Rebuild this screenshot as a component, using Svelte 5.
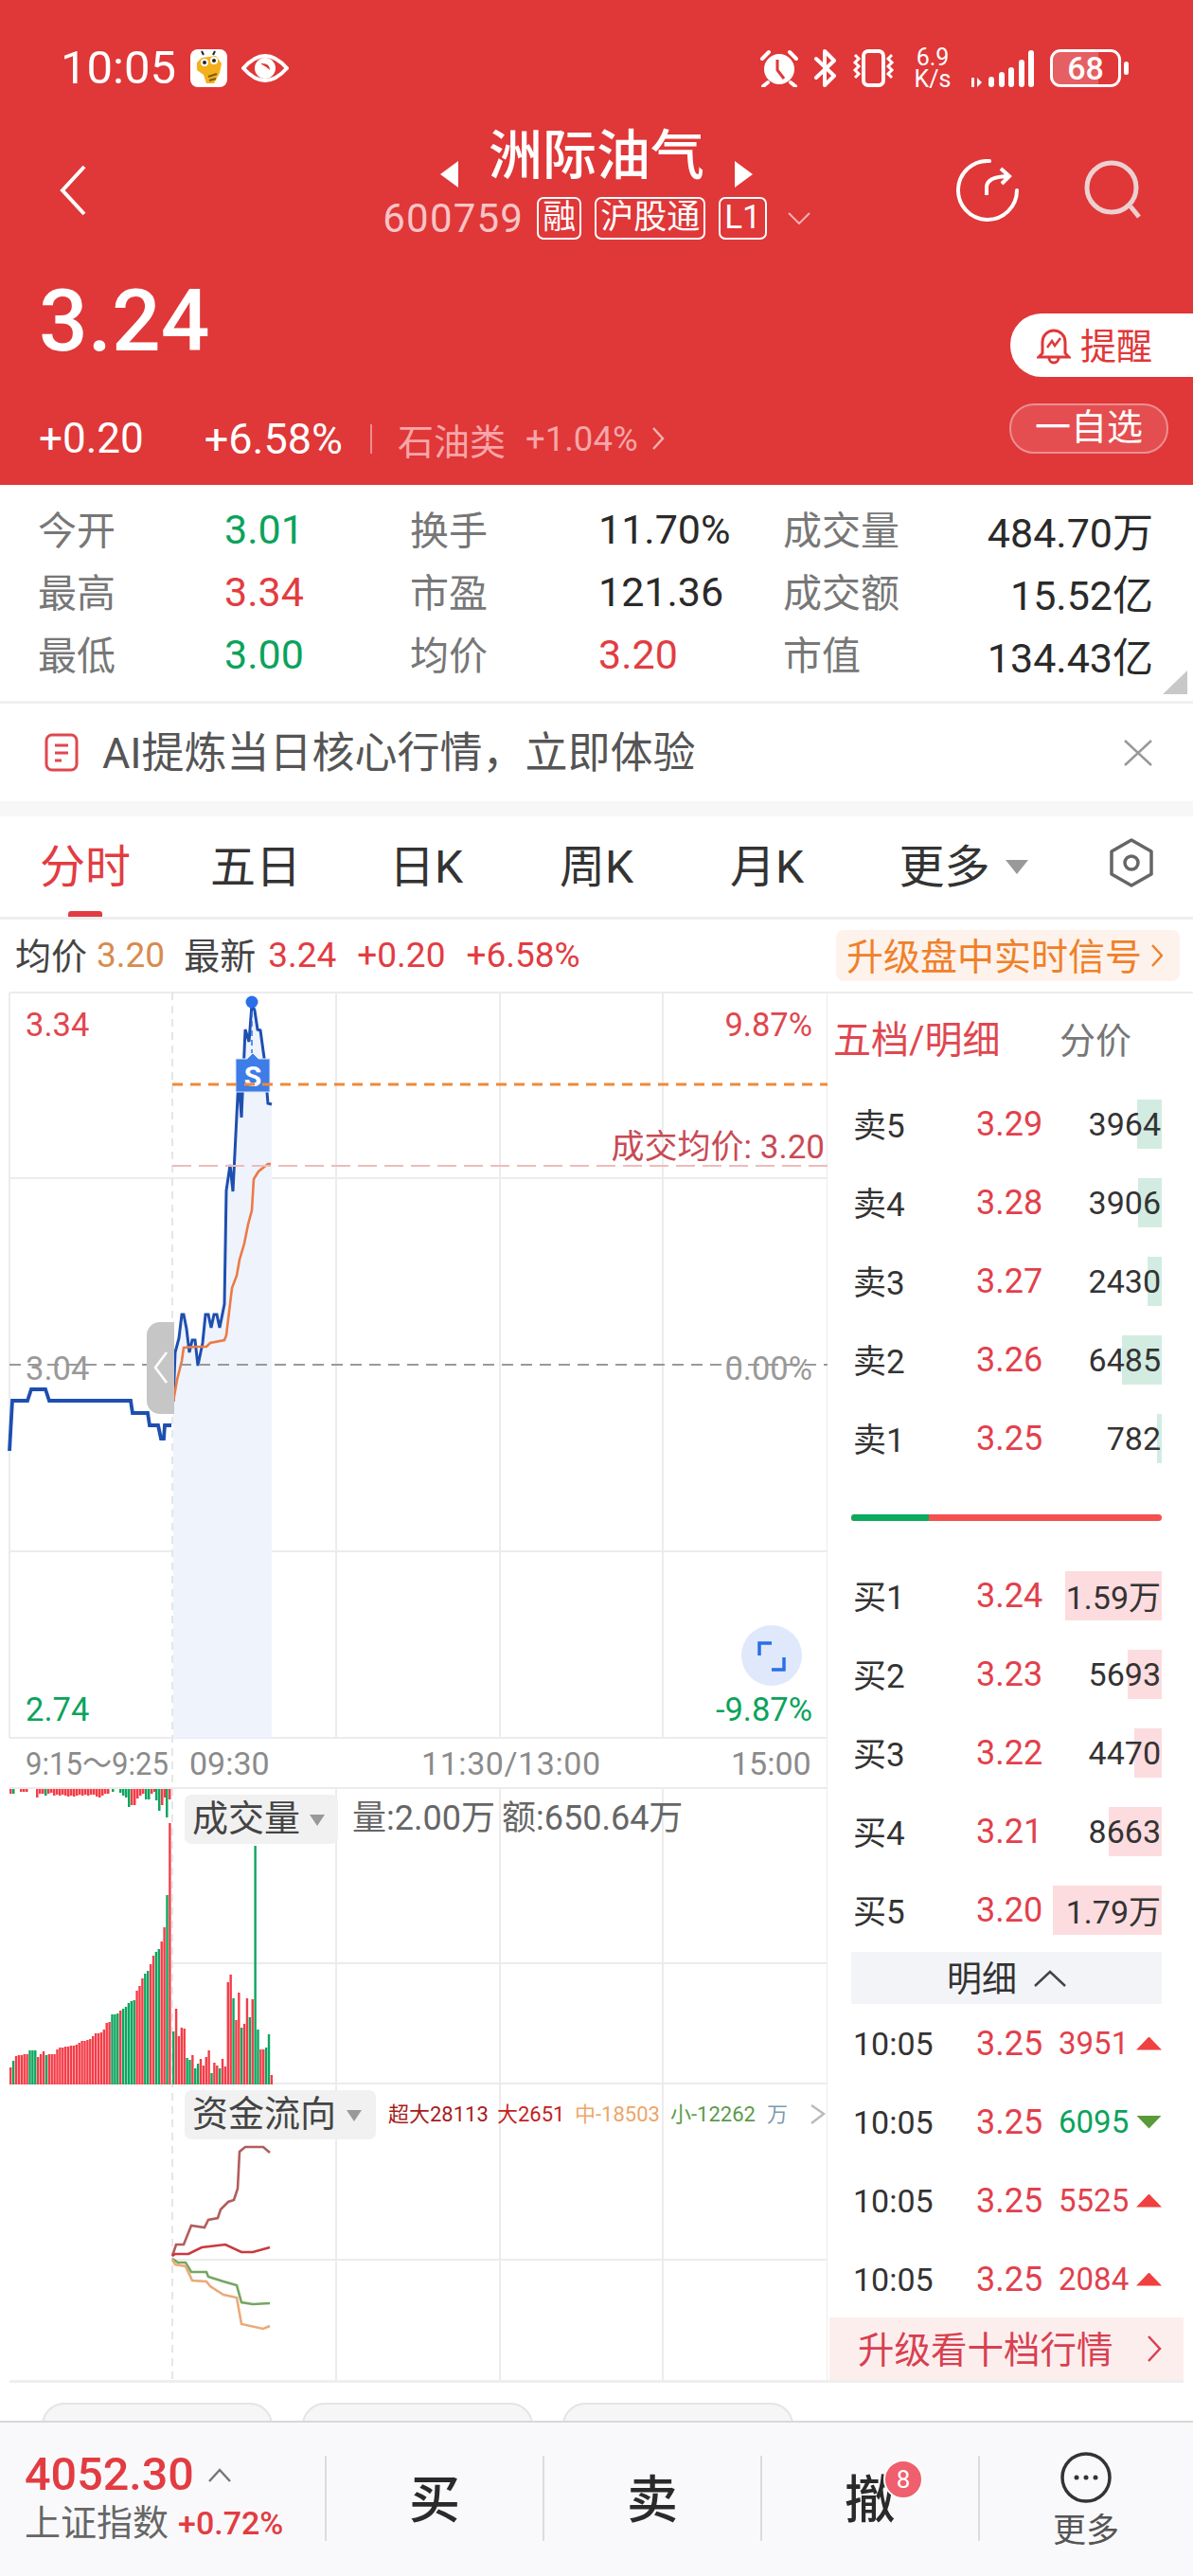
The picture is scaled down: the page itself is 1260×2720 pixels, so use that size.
<script>
  const stats = [
    ['今开', '3.01', 'g', '换手', '11.70%', '', '成交量', '484.70万'],
    ['最高', '3.34', 'r', '市盈', '121.36', '', '成交额', '15.52亿'],
    ['最低', '3.00', 'g', '均价', '3.20', 'r', '市值', '134.43亿']
  ]
  const tabs = ['分时', '五日', '日K', '周K', '月K']

  const sells = [
    ['卖5', '3.29', '3964', 26],
    ['卖4', '3.28', '3906', 25],
    ['卖3', '3.27', '2430', 15],
    ['卖2', '3.26', '6485', 42],
    ['卖1', '3.25', '782', 5]
  ]
  const buys = [
    ['买1', '3.24', '1.59万', 102],
    ['买2', '3.23', '5693', 36],
    ['买3', '3.22', '4470', 29],
    ['买4', '3.21', '8663', 56],
    ['买5', '3.20', '1.79万', 115]
  ]
  const ticks = [
    ['10:05', '3.25', '3951', true],
    ['10:05', '3.25', '6095', false],
    ['10:05', '3.25', '5525', true],
    ['10:05', '3.25', '2084', true]
  ]

  // chart coordinates are page pixels, the svg viewBox starts at y=1047
  const preLine = '10,1532 13,1479 29,1479 33,1467 48,1467 52,1479 138,1479 140,1492 156,1492 158,1505 167,1505 170,1519 173,1519 174,1505 181,1505'
  const mainLine = '183,1480 185,1428 189,1413 192,1388 194,1388 197,1403 200,1428 203,1415 206,1415 209,1442 214,1418 217,1388 220,1388 223,1402 226,1388 229,1388 232,1402 237,1377 239,1257 243,1230 246,1258 252,1138 255,1180 259,1087 263,1100 266,1060 269,1067 272,1087 275,1088 279,1117 283,1165 287,1166'
  const avgLine = '183,1480 187,1457 192,1437 194,1423 208,1422 218,1422 222,1418 237,1415 239,1410 245,1360 250,1347 253,1330 258,1313 262,1293 266,1278 268,1245 273,1237 283,1229 286,1229'

  const flowXL = '182,2382 186,2370 194,2370 202,2350 216,2352 220,2344 230,2342 233,2333 241,2325 247,2323 251,2311 253,2272 259,2267 278,2267 285,2273'
  const flowL = '182,2382 185,2380 199,2380 213,2373 238,2370 255,2378 267,2378 285,2373'
  const flowS = '182,2385 188,2389 196,2389 202,2399 218,2399 220,2404 236,2409 250,2413 255,2431 267,2433 285,2432'
  const flowM = '182,2386 185,2391 196,2393 203,2408 218,2409 222,2414 236,2423 250,2426 255,2454 278,2459 285,2456'

  const preH = [18,25,30,31,31,32,32,36,36,36,29,32,35,31,32,32,32,37,39,39,40,40,41,41,42,44,46,46,47,48,51,54,54,55,58,65,66,74,74,75,78,80,82,86,88,89,99,104,112,117,120,127,136,140,143,151,166,200,276]
  const preC = 'rgrrrrrgggrrrgrrrrrrrrrrrrrrrrrrrrrrrgggrgggggrrrggrrggrrgr'
  const postH = [56,80,51,60,59,28,26,31,17,22,27,20,29,36,12,23,20,17,27,19,108,116,91,68,97,60,64,91,71,90,252,58,37,37,39,53,10]
  const postC = 'grrrrggrggrrrrgrrgrrrrgrrgrrgrggrrggr'

  const topBars = [
    [10,5,'r'],[13,5,'g'],[21,3,'r'],[24,3,'r'],[27,3,'r'],
    [38,9,'r'],[41,5,'r'],[44,5,'r'],[47,7,'g'],[50,5,'r'],[53,4,'r'],[56,7,'r'],[59,6,'r'],[62,7,'r'],[65,6,'r'],[68,7,'r'],[71,8,'r'],[74,7,'r'],[77,8,'r'],[80,7,'r'],[83,6,'r'],[86,7,'r'],[89,6,'r'],[92,7,'r'],[95,6,'r'],[98,6,'r'],[101,8,'r'],[104,9,'r'],[107,7,'r'],[110,5,'r'],[113,5,'r'],
    [118,3,'g'],[126,4,'g'],[129,7,'g'],[132,9,'g'],[135,19,'g'],[138,17,'r'],[141,17,'r'],[144,10,'r'],[147,7,'r'],[150,5,'r'],[153,11,'g'],[156,11,'g'],[159,5,'r'],[162,3,'r'],[164,12,'g'],[167,23,'g'],[170,17,'r'],[173,9,'r'],[175,30,'g'],[178,11,'r']
  ]

  const colour = { r: '#f53c48', g: '#0ca65f' }
  const bars = [
    ...preH.map((h, i) => ({ x: 10 + i * 2.9, h, c: colour[preC[i]] })),
    ...postH.map((h, i) => ({ x: 182 + i * 2.88, h, c: colour[postC[i]] }))
  ]
</script>

<div class="page">
  <header class="top">
    <div class="status">
      <div class="status-left">
        <span class="clock">10:05</span>
        <svg class="bee" width="39" height="40" viewBox="0 0 39 40">
          <rect width="39" height="40" rx="8" fill="#fff"/>
          <path d="M12 9 L27 7 L33 15 L31 25 L25 36 L17 36 L14 27 L7 22 L7 14Z" fill="#f4b01c"/>
          <circle cx="15" cy="14" r="4" fill="#fff"/><circle cx="25" cy="12" r="4" fill="#fff"/>
          <circle cx="15" cy="14" r="2" fill="#222"/><circle cx="25" cy="12" r="2" fill="#222"/>
          <path d="M19 29l9-3M20 33l7-2" stroke="#7a5a10" stroke-width="2"/>
          <path d="M14 6l-2-4M24 6l2-4" stroke="#222" stroke-width="2"/>
        </svg>
        <svg class="eye" width="50" height="36" viewBox="0 0 50 36">
          <path d="M2 18 Q25 -8 48 18 Q25 44 2 18Z" fill="none" stroke="#fff" stroke-width="4"/>
          <circle cx="25" cy="18" r="11" fill="#fff"/>
          <path d="M20 13 Q30 12 30 20 Q27 17 20 13Z" fill="#e03738"/>
        </svg>
      </div>
      <div class="status-right">
        <svg width="42" height="40" viewBox="0 0 42 40">
          <circle cx="21" cy="21" r="16" fill="#fff"/>
          <path d="M19 11v11l7 9" fill="none" stroke="#e03738" stroke-width="3"/>
          <path d="M3 10 L10 3 M32 3 L39 10 M9 35 L4 39 M33 35 L38 39" stroke="#fff" stroke-width="4" stroke-linecap="round"/>
        </svg>
        <svg class="bt" width="25" height="40" viewBox="0 0 25 40">
          <path d="M3 10 L22 28 L12 38 V2 L22 12 L3 30" fill="none" stroke="#fff" stroke-width="4" stroke-linejoin="round" stroke-linecap="round"/>
        </svg>
        <svg class="vib" width="47" height="40" viewBox="0 0 47 40">
          <rect x="13" y="2" width="21" height="36" rx="5" fill="none" stroke="#fff" stroke-width="4"/>
          <path d="M4 6l4 4-4 4 4 4-4 4 4 4-4 4M43 6l-4 4 4 4-4 4 4 4-4 4 4 4" fill="none" stroke="#fff" stroke-width="3"/>
        </svg>
        <div class="speed"><span>6.9</span><span>K/s</span></div>
        <svg class="signal" width="70" height="40" viewBox="0 0 70 40">
          <path d="M3 30h3v10h-3zM9 30l5 5-5 5z" fill="#fff"/>
          <rect x="21" y="29" width="6" height="11" rx="3" fill="#fff"/>
          <rect x="32" y="24" width="6" height="16" rx="3" fill="#fff"/>
          <rect x="42" y="19" width="6" height="21" rx="3" fill="#fff"/>
          <rect x="53" y="11" width="6" height="29" rx="3" fill="#fff"/>
          <rect x="63" y="1" width="6" height="39" rx="3" fill="#fff"/>
        </svg>
        <div class="battery"><span>68</span></div>
        <i class="nub"></i>
      </div>
    </div>

    <div class="nav">
      <div class="nav-left">
        <svg width="30" height="54" viewBox="0 0 30 54"><path d="M27 2 L4 27 L27 52" fill="none" stroke="#fff" stroke-width="4"/></svg>
      </div>
      <div class="nav-mid">
        <div class="title-row">
          <svg class="tri" width="20" height="28" viewBox="0 0 20 28"><path d="M20 0V28L1 14Z" fill="#fff"/></svg>
          <h1>洲际油气</h1>
          <svg class="tri" width="20" height="28" viewBox="0 0 20 28"><path d="M0 0V28L19 14Z" fill="#fff"/></svg>
        </div>
        <div class="code-row">
          <span class="code">600759</span>
          <span class="tag">融</span>
          <span class="tag">沪股通</span>
          <span class="tag">L1</span>
          <svg class="code-chev" width="24" height="13" viewBox="0 0 24 13"><path d="M1 1 L12 12 L23 1" fill="none" stroke="#f3b0b2" stroke-width="2"/></svg>
        </div>
      </div>
      <div class="nav-right">
        <svg width="66" height="66" viewBox="0 0 66 66">
          <path d="M35 2 A31 31 0 1 0 64 33" fill="none" stroke="#fff" stroke-width="4" stroke-linecap="round"/>
          <path d="M32 38 V30 Q32 18 56 18 M47 10 L56 18 L48 26" fill="none" stroke="#fff" stroke-width="4"/>
        </svg>
        <svg width="66" height="66" viewBox="0 0 66 66">
          <circle cx="30" cy="30" r="26" fill="none" stroke="#ecd0d1" stroke-width="5"/>
          <path d="M50 50 L59 61" stroke="#ecd0d1" stroke-width="5"/>
        </svg>
      </div>
    </div>

    <div class="quote">
      <div>
        <div class="price">3.24</div>
        <div class="change">
          <span class="c1">+0.20</span>
          <span class="c2">+6.58%</span>
          <i class="bar"></i>
          <span class="sector">石油类</span>
          <span class="sector-pct">+1.04%</span>
          <svg width="14" height="26" viewBox="0 0 14 26"><path d="M2 2 L12 13 L2 24" fill="none" stroke="#f3b0b2" stroke-width="2.5"/></svg>
        </div>
      </div>
      <div class="actions">
        <button class="remind">
          <svg width="36" height="40" viewBox="0 0 36 40">
            <path d="M6 28 V16 A12 12 0 0 1 30 16 V28 L34 32 H2Z M13 33 A5 5 0 0 0 23 33" fill="none" stroke="#e03738" stroke-width="3"/>
            <path d="M11 22 L16 15 L19 20 L25 12" fill="none" stroke="#e03738" stroke-width="2.5"/>
          </svg>
          <span>提醒</span>
        </button>
        <button class="watch">一自选</button>
      </div>
    </div>
  </header>

  <section class="stats">
    {#each stats as s}
      <span class="lab">{s[0]}</span><span class={s[2]}>{s[1]}</span>
      <span class="lab">{s[3]}</span><span class={s[5]}>{s[4]}</span>
      <span class="lab">{s[6]}</span><span class="end">{s[7]}</span>
    {/each}
    <i class="fold"></i>
  </section>

  <div class="ai">
    <svg width="36" height="41" viewBox="0 0 36 41">
      <rect x="2" y="2" width="32" height="37" rx="6" fill="none" stroke="#e0474f" stroke-width="3"/>
      <path d="M11 13h14M11 21h14M11 29h7" stroke="#e0474f" stroke-width="3"/>
    </svg>
    <span>AI提炼当日核心行情，立即体验</span>
    <svg class="close" width="30" height="28" viewBox="0 0 30 28"><path d="M1 1 L29 27 M29 1 L1 27" stroke="#999" stroke-width="2.5"/></svg>
  </div>
  <div class="band"></div>

  <nav class="tabs">
    {#each tabs as t, i}
      <div class="tab" class:on={i === 0}>{t}</div>
    {/each}
    <div class="tab more">更多<i class="caret"></i></div>
    <div class="tab gear">
      <svg width="48" height="52" viewBox="0 0 48 52">
        <path d="M24 2 L45 14 V38 L24 50 L3 38 V14Z" fill="none" stroke="#666" stroke-width="3.5" stroke-linejoin="round"/>
        <circle cx="24" cy="26" r="7" fill="none" stroke="#666" stroke-width="3.5"/>
      </svg>
    </div>
  </nav>

  <div class="legend">
    <span class="dark">均价</span><span class="orange">3.20</span>
    <span class="dark gap">最新</span><span class="red">3.24</span>
    <span class="red gap">+0.20</span><span class="red gap">+6.58%</span>
    <div class="signal-btn"><span>升级盘中实时信号</span>
      <svg width="12" height="26" viewBox="0 0 12 26"><path d="M1 2 L11 13 L1 24" fill="none" stroke="#f0802a" stroke-width="2.5"/></svg>
    </div>
  </div>

  <main class="board">
    <svg class="chart" width="874" height="1466" viewBox="0 1047 874 1466">
      <!-- grid -->
      <path d="M10 1048H874M10 1244H874M10 1638H874M10 1835H874M10 1888H874M182 2073H874M10 2200H874M182 2386H874M10 1048V1835M874 1047V2513" class="grid"/>
      {#each [355, 528, 700] as x}
        <path d="M{x} 1048V1835M{x} 1888V2513" class="grid"/>
      {/each}
      <path d="M182 1048V2513" class="vdash"/>

      <!-- price -->
      <polygon points="183,1835 {mainLine} 287,1835" fill="#eef3fc"/>
      <polyline points={preLine} class="blue thick"/>
      <polyline points={mainLine} class="blue"/>
      <polyline points={avgLine} class="avg"/>
      <path d="M266 1058V1112" stroke="#2a6fe8" stroke-width="1.5" stroke-dasharray="6 4"/>
      <circle cx="266" cy="1058" r="6.5" fill="#2a6fe8"/>
      <path d="M249 1118H261L267 1112L273 1118H285V1153H249Z" fill="#3e7ce8" stroke="#dbe6fb" stroke-width="1"/>
      <text x="267" y="1147" class="flag">S</text>
      <path d="M182 1145H874" class="orange-dash"/>
      <path d="M182 1231H874" class="pink-dash"/>
      <path d="M10 1441H874" class="mid-dash"/>
      <text x="871" y="1223" class="avg-lab">成交均价: 3.20</text>

      <text x="27" y="1094" class="axis tr">3.34</text>
      <text x="858" y="1094" class="axis tr e">9.87%</text>
      <text x="27" y="1457" class="axis tn">3.04</text>
      <text x="858" y="1457" class="axis tn e">0.00%</text>
      <text x="27" y="1817" class="axis tg">2.74</text>
      <text x="858" y="1817" class="axis tg e">-9.87%</text>

      <path d="M184 1396H169A14 14 0 0 0 155 1410V1479A14 14 0 0 0 169 1493H184Z" fill="#c6c6c6"/>
      <path d="M176 1428L164 1444L176 1460" fill="none" stroke="#fff" stroke-width="2.5"/>

      <circle cx="815" cy="1748" r="32" fill="#dfe9fb"/>
      <path d="M802 1748V1735H815M828 1750V1763H815" fill="none" stroke="#2a6fe8" stroke-width="3.5"/>

      <!-- time axis -->
      <text x="27" y="1874" class="time" textLength="151" lengthAdjust="spacingAndGlyphs">9:15～9:25</text>
      <text x="200" y="1874" class="time">09:30</text>
      <text x="445" y="1874" class="time" textLength="189">11:30/13:00</text>
      <text x="772" y="1874" class="time">15:00</text>

      <!-- volume -->
      {#each topBars as b}
        <rect x={b[0]} y="1889" width="2.5" height={b[1]} fill={colour[b[2]]}/>
      {/each}
      {#each bars as b}
        <rect x={b.x} y={2201 - b.h} width="2.4" height={b.h} fill={b.c}/>
      {/each}
      <rect x="195" y="1895" width="162" height="52" rx="7" fill="#f1f1f1"/>
      <text x="203" y="1933" class="chip">成交量</text>
      <path d="M327 1916H343L335 1928Z" fill="#999"/>
      <text x="372" y="1932" class="vol">量:2.00万</text>
      <text x="530" y="1932" class="vol">额:650.64万</text>

      <!-- money flow -->
      <rect x="195" y="2207" width="202" height="52" rx="7" fill="#f1f1f1"/>
      <text x="203" y="2245" class="chip">资金流向</text>
      <path d="M366 2228H382L374 2240Z" fill="#999"/>
      <text x="410" y="2240" class="flow" fill="#a61c1c">超大28113</text>
      <text x="525" y="2240" class="flow" fill="#c41e1e">大2651</text>
      <text x="607" y="2240" class="flow" fill="#eda669">中-18503</text>
      <text x="708" y="2240" class="flow" fill="#5a9b4a">小-12262</text>
      <text x="810" y="2240" class="flow" fill="#7d9ab0">万</text>
      <path d="M857 2223L870 2232L857 2242" fill="none" stroke="#bbb" stroke-width="2.5"/>
      <polyline points={flowXL} class="fl" stroke="#b35c5c"/>
      <polyline points={flowL} class="fl" stroke="#c9393f"/>
      <polyline points={flowS} class="fl" stroke="#74a660"/>
      <polyline points={flowM} class="fl" stroke="#ebaa78"/>
    </svg>

    <aside class="side">
      <div class="side-head">
        <span class="red-head">五档/明细</span>
        <span class="grey-head">分价</span>
      </div>
      {#each sells as r}
        <div class="row sell">
          <i class="depth ask" style="width:{r[3]}px"></i>
          <span class="name">{r[0]}</span><span class="px">{r[1]}</span><span class="qty">{r[2]}</span>
        </div>
      {/each}
      <div class="split"><i></i></div>
      {#each buys as r}
        <div class="row buy">
          <i class="depth bid" style="width:{r[3]}px"></i>
          <span class="name">{r[0]}</span><span class="px">{r[1]}</span><span class="qty">{r[2]}</span>
        </div>
      {/each}
      <div class="detail-head"><span>明细</span>
        <svg width="34" height="18" viewBox="0 0 34 18"><path d="M1 17 L17 2 L33 17" fill="none" stroke="#444" stroke-width="2.5"/></svg>
      </div>
      {#each ticks as t}
        <div class="row sell tick">
          <span class="name">{t[0]}</span><span class="px">{t[1]}</span>
          <span class="tq" class:down={!t[3]}>{t[2]}</span>
          <i class="arrow" class:down={!t[3]}></i>
        </div>
      {/each}
      <div class="upgrade"><span>升级看十档行情</span>
        <svg width="16" height="30" viewBox="0 0 16 30"><path d="M2 2 L14 15 L2 28" fill="none" stroke="#d84050" stroke-width="2.5"/></svg>
      </div>
    </aside>
  </main>

  <div class="pills">
    <i></i><i></i><i></i>
  </div>

  <footer class="dock">
    <div class="index">
      <div class="idx-top">4052.30
        <svg width="24" height="15" viewBox="0 0 24 15"><path d="M1 14 L12 2 L23 14" fill="none" stroke="#777" stroke-width="2.5"/></svg>
      </div>
      <div class="idx-sub"><span>上证指数</span><b>+0.72%</b></div>
    </div>
    <div class="cell"><span class="act">买</span></div>
    <div class="cell"><span class="act">卖</span></div>
    <div class="cell"><span class="act">撤</span><span class="badge">8</span></div>
    <div class="cell last">
      <svg width="54" height="54" viewBox="0 0 54 54">
        <circle cx="27" cy="27" r="25" fill="none" stroke="#333" stroke-width="3.5"/>
        <circle cx="17" cy="27" r="2.5" fill="#333"/><circle cx="27" cy="27" r="2.5" fill="#333"/><circle cx="37" cy="27" r="2.5" fill="#333"/>
      </svg>
      <span>更多</span>
    </div>
  </footer>
</div>

<style>
  :global(body) {
    background: #fff;
  }
  .page {
    width: 1260px;
    height: 2720px;
    overflow: hidden;
    font-family: Roboto, "Noto Sans CJK SC", sans-serif;
    color: #222;
  }

  /* red header */
  .top {
    height: 512px;
    background: #e03738;
    color: #fff;
    display: flex;
    flex-direction: column;
  }
  .status {
    height: 40px;
    margin-top: 52px;
    padding: 0 68px 0 64px;
    display: flex;
    justify-content: space-between;
  }
  .status-left, .status-right {
    display: flex;
    align-items: center;
  }
  .clock {
    font-size: 49px;
    line-height: 40px;
    width: 137px;
  }
  .eye {
    margin-left: 15px;
  }
  .status-right svg {
    flex: none;
  }
  .bt { margin-left: 15px; }
  .vib { margin-left: 15px; }
  .speed {
    margin-left: 19px;
    width: 40px;
    display: flex;
    flex-direction: column;
    align-items: center;
    font-size: 25px;
    line-height: 23px;
  }
  .signal { margin-left: 18px; }
  .battery {
    margin-left: 16px;
    width: 75px;
    height: 40px;
    box-sizing: border-box;
    border: 3px solid #fff;
    border-radius: 11px;
    background: linear-gradient(90deg, #e65f62 70%, transparent 70%);
    display: flex;
    align-items: center;
    justify-content: center;
    font-size: 34px;
    font-weight: 500;
  }
  .nub {
    margin-left: 3px;
    width: 5px;
    height: 14px;
    border-radius: 3px;
    background: #fff;
  }
  .nav {
    margin-top: 45px;
    height: 116px;
    display: grid;
    grid-template-columns: 1fr auto 1fr;
  }
  .nav-left {
    padding: 37px 0 0 62px;
  }
  .nav-right {
    padding: 31px 50px 0 0;
    display: flex;
    justify-content: flex-end;
    gap: 68px;
  }
  .title-row {
    height: 55px;
    display: flex;
    justify-content: center;
    gap: 32px;
  }
  .tri {
    margin-top: 33px;
  }
  h1 {
    margin: 0;
    font-size: 57px;
    line-height: 55px;
    font-weight: 500;
  }
  .code-row {
    margin-top: 16px;
    height: 45px;
    display: flex;
    align-items: center;
    gap: 14px;
    color: #fff;
  }
  .code {
    font-size: 42px;
    letter-spacing: 1.2px;
    color: #f8c4c6;
  }
  .tag {
    height: 45px;
    box-sizing: border-box;
    padding: 0 4px;
    border: 2px solid #fff;
    border-radius: 7px;
    font-size: 35px;
    line-height: 39px;
  }
  .code-chev {
    margin-left: 8px;
  }
  .quote {
    display: flex;
    justify-content: space-between;
  }
  .price {
    margin: 42px 0 0 41px;
    height: 88px;
    line-height: 88px;
    font-size: 91px;
    font-weight: 500;
  }
  .change {
    margin: 60px 0 0 41px;
    height: 40px;
    display: flex;
    align-items: center;
  }
  .c1 { font-size: 44px; }
  .c2 {
    margin-left: 64px;
    font-size: 45px;
  }
  .bar {
    margin-left: 29px;
    width: 2px;
    height: 31px;
    background: #eb8e8f;
  }
  .sector {
    margin-left: 27px;
    font-size: 38px;
    color: #f6a6a8;
  }
  .sector-pct {
    margin-left: 21px;
    font-size: 36.5px;
    color: #f6a6a8;
  }
  .change svg {
    margin-left: 14px;
  }
  .actions {
    padding-top: 78px;
    display: flex;
    flex-direction: column;
    align-items: flex-end;
    gap: 28px;
  }
  button {
    font-family: inherit;
    padding: 0;
  }
  .remind {
    width: 193px;
    height: 67px;
    border: none;
    background: #fff;
    border-radius: 33px 0 0 33px;
    color: #e03738;
    font-size: 38px;
    display: flex;
    align-items: center;
    gap: 10px;
    padding-left: 28px;
    box-sizing: border-box;
  }
  .remind span {
    margin-top: -5px;
  }
  .watch {
    width: 168px;
    height: 53px;
    margin-right: 26px;
    box-sizing: border-box;
    border: 2px solid #ec8f90;
    border-radius: 26px;
    background: #e54e50;
    color: #fff;
    font-size: 38px;
    line-height: 42px;
    padding-bottom: 4px;
  }

  /* stats */
  .stats {
    position: relative;
    height: 231px;
    box-sizing: border-box;
    padding: 14px 42px 0 40px;
    display: grid;
    grid-template-columns: 197px 196px 199px 195px 1fr auto;
    grid-auto-rows: 66px;
    align-items: center;
    font-size: 43px;
    border-bottom: 3px solid #f1f1f1;
    color: #2a2a2a;
  }
  .lab {
    color: #777;
    font-size: 41px;
    margin-top: -5px;
  }
  .end { justify-self: end; }
  .g { color: #0aa35c; }
  .r { color: #e23c42; }
  .fold {
    position: absolute;
    right: 6px;
    bottom: 7px;
    width: 26px;
    height: 25px;
    background: #c8c8c8;
    clip-path: polygon(100% 0, 100% 100%, 0 100%);
  }

  .ai {
    height: 103px;
    display: flex;
    align-items: center;
    padding: 0 43px 0 47px;
    color: #555;
    font-size: 45px;
  }
  .ai span {
    margin-left: 25px;
    margin-top: -6px;
  }
  .close {
    margin-left: auto;
  }
  .band {
    height: 16px;
    background: #f7f7f7;
  }

  .tabs {
    height: 109px;
    box-sizing: border-box;
    display: flex;
    border-bottom: 3px solid #eee;
    font-size: 48px;
    color: #333;
  }
  .tab {
    position: relative;
    width: 180px;
    display: flex;
    align-items: center;
    justify-content: center;
    padding-bottom: 8px;
    box-sizing: border-box;
  }
  .tab.on {
    color: #e23c42;
  }
  .tab.on::after {
    content: '';
    position: absolute;
    left: 72px;
    bottom: 0;
    width: 36px;
    height: 6px;
    border-radius: 3px 3px 0 0;
    background: #e23c42;
  }
  .tab.more {
    width: 230px;
    padding-left: 5px;
  }
  .tab.gear { width: 130px; }
  .caret {
    margin-left: 16px;
    margin-top: 8px;
    border: 12px solid transparent;
    border-top: 15px solid #999;
    border-bottom: 0;
  }

  .legend {
    height: 76px;
    padding: 0 14px 0 16px;
    display: flex;
    align-items: center;
    font-size: 37px;
  }
  .dark { color: #444; font-size: 38px; margin-top: -5px; }
  .orange { color: #d78b4e; margin-left: 10px; margin-top: -2px; }
  .red { color: #e23c42; margin-left: 13px; margin-top: -2px; }
  .dark.gap { margin-left: 20px; }
  .red.gap { margin-left: 22px; }
  .signal-btn {
    margin-left: auto;
    width: 363px;
    height: 54px;
    box-sizing: border-box;
    padding-left: 11px;
    display: flex;
    align-items: center;
    gap: 10px;
    border-radius: 8px;
    background: #fef3ec;
    color: #f0802a;
    font-size: 39px;
  }
  .signal-btn span {
    margin-top: -4px;
  }

  /* chart + order book */
  .board {
    display: flex;
    height: 1466px;
  }
  .chart {
    flex: none;
    display: block;
  }
  .grid {
    fill: none;
    stroke: #ececec;
    stroke-width: 2;
  }
  .vdash {
    fill: none;
    stroke: #e6e6e6;
    stroke-width: 2;
    stroke-dasharray: 8 6;
  }
  polyline {
    fill: none;
  }
  .blue {
    stroke: #1e4fb0;
    stroke-width: 3;
  }
  .thick {
    stroke-width: 3.8;
  }
  .avg {
    stroke: #ec7a45;
    stroke-width: 2.6;
  }
  .fl {
    stroke-width: 2.6;
  }
  .orange-dash {
    stroke: #ee8a3a;
    stroke-width: 3;
    stroke-dasharray: 11 8;
  }
  .pink-dash {
    stroke: #eebbbb;
    stroke-width: 2;
    stroke-dasharray: 20 8;
  }
  .mid-dash {
    stroke: #999;
    stroke-width: 2;
    stroke-dasharray: 12 8;
  }
  .flag {
    font-size: 30px;
    font-weight: 700;
    fill: #fff;
    text-anchor: middle;
  }
  .avg-lab {
    font-size: 35px;
    fill: #c94a54;
    text-anchor: end;
  }
  .axis {
    font-size: 34.5px;
  }
  .axis.e {
    text-anchor: end;
  }
  .tr { fill: #e0474f; }
  .tn { fill: #999; }
  .tg { fill: #0aa35c; }
  .time {
    font-size: 34px;
    fill: #8b8b8b;
  }
  .chip {
    font-size: 38px;
    fill: #444;
  }
  .vol {
    font-size: 36px;
    fill: #666;
  }
  .flow {
    font-size: 22px;
  }

  .side {
    flex: 1;
    padding: 0 10px 0 0;
    display: flex;
    flex-direction: column;
    border-top: 2px solid #ececec;
    box-sizing: border-box;
  }
  .side-head {
    height: 96px;
    flex: none;
    padding: 0 0 4px 6px;
    box-sizing: border-box;
    display: flex;
    align-items: center;
  }
  .red-head {
    color: #e0474f;
    width: 239px;
    font-size: 40px;
  }
  .grey-head {
    color: #777;
    font-size: 38px;
  }
  .row {
    position: relative;
    margin: 0 23px 0 25px;
    height: 83px;
    flex: none;
    display: grid;
    grid-template-columns: 132px 72px 1fr;
    align-items: center;
  }
  .name {
    position: relative;
    padding-left: 2px;
    margin-top: -3px;
    font-size: 35px;
    color: #333;
  }
  .px {
    position: relative;
    font-size: 36px;
    color: #e2404c;
  }
  .qty {
    position: relative;
    justify-self: end;
    padding-right: 1px;
    font-size: 34px;
    color: #333;
  }
  .depth {
    position: absolute;
    right: 0;
    top: 50%;
    transform: translateY(-50%);
    height: 52px;
  }
  .ask { background: #d3ece1; }
  .bid { background: #fcdcdf; }
  .split {
    margin: 39px 23px 37px 25px;
    height: 7px;
    flex: none;
    border-radius: 4px;
    background: #f55050;
    overflow: hidden;
  }
  .split i {
    display: block;
    width: 82px;
    height: 7px;
    background: #0caa5f;
  }
  .detail-head {
    margin: 3px 23px 0 25px;
    height: 55px;
    flex: none;
    display: flex;
    align-items: center;
    justify-content: center;
    gap: 18px;
    background: #f3f4f8;
    font-size: 37px;
    color: #333;
  }
  .detail-head span {
    margin-top: -4px;
  }
  .tick {
    grid-template-columns: 132px 87px 72px 1fr;
  }
  .tick .name {
    font-size: 34px;
    margin-top: 0;
  }
  .tq {
    font-size: 33px;
    color: #e2404c;
  }
  .tq.down {
    color: #0aa35c;
  }
  .arrow {
    justify-self: end;
    width: 27px;
    height: 14px;
    background: #f04040;
    clip-path: polygon(50% 0, 100% 100%, 0 100%);
  }
  .arrow.down {
    background: #5a9a3a;
    clip-path: polygon(0 0, 100% 0, 50% 100%);
  }
  .upgrade {
    margin: -1px 0 0 2px;
    height: 66px;
    flex: none;
    box-sizing: border-box;
    padding-left: 30px;
    display: flex;
    align-items: center;
    gap: 35px;
    background: #fdeeee;
    color: #d84050;
    font-size: 38.5px;
  }
  .upgrade span {
    margin-top: -4px;
  }

  .pills {
    height: 43px;
    margin: 0 10px;
    padding: 21px 0 0 34px;
    box-sizing: border-box;
    border-top: 3px solid #eee;
    display: flex;
    gap: 31px;
    overflow: hidden;
  }
  .pills i {
    flex: none;
    width: 244px;
    height: 60px;
    box-sizing: border-box;
    border: 2px solid #e5e5e5;
    border-radius: 24px 24px 0 0;
    background: #f6f6f6;
  }

  .dock {
    height: 164px;
    box-sizing: border-box;
    padding-top: 35px;
    border-top: 2px solid #d8d8dc;
    background: #f9f9fb;
    display: flex;
    align-items: flex-start;
  }
  .index {
    width: 343px;
    height: 90px;
    padding-left: 26px;
    box-sizing: border-box;
  }
  .idx-top {
    height: 42px;
    line-height: 42px;
    margin-top: -1px;
    font-size: 48.5px;
    font-weight: 500;
    color: #e23c42;
    display: flex;
    align-items: center;
    gap: 15px;
  }
  .idx-sub {
    margin-top: 7px;
    display: flex;
    align-items: center;
    gap: 10px;
    font-size: 38px;
    line-height: 46px;
    color: #666;
  }
  .idx-sub b {
    font-size: 34px;
    font-weight: 500;
    color: #e23c42;
  }
  .cell {
    position: relative;
    width: 230px;
    height: 90px;
    box-sizing: border-box;
    border-left: 2px solid #dcdcdc;
    display: flex;
    align-items: center;
    justify-content: center;
    font-size: 54px;
    font-weight: 500;
    color: #2a2a2a;
  }
  .act {
    margin-top: -5px;
  }
  .badge {
    position: absolute;
    left: 128px;
    top: 4px;
    width: 42px;
    height: 42px;
    border-radius: 50%;
    background: #ef5f6d;
    border: 2px solid #fff;
    box-sizing: border-box;
    display: flex;
    align-items: center;
    justify-content: center;
    font-size: 26px;
    font-weight: 400;
    color: #fff;
  }
  .last {
    width: 226px;
    flex-direction: column;
    justify-content: flex-start;
    font-size: 35px;
    font-weight: 400;
    color: #555;
  }
  .last svg {
    flex: none;
    margin-top: -4px;
  }
  .last span {
    flex: none;
    margin-top: 10px;
    line-height: 40px;
  }
</style>
